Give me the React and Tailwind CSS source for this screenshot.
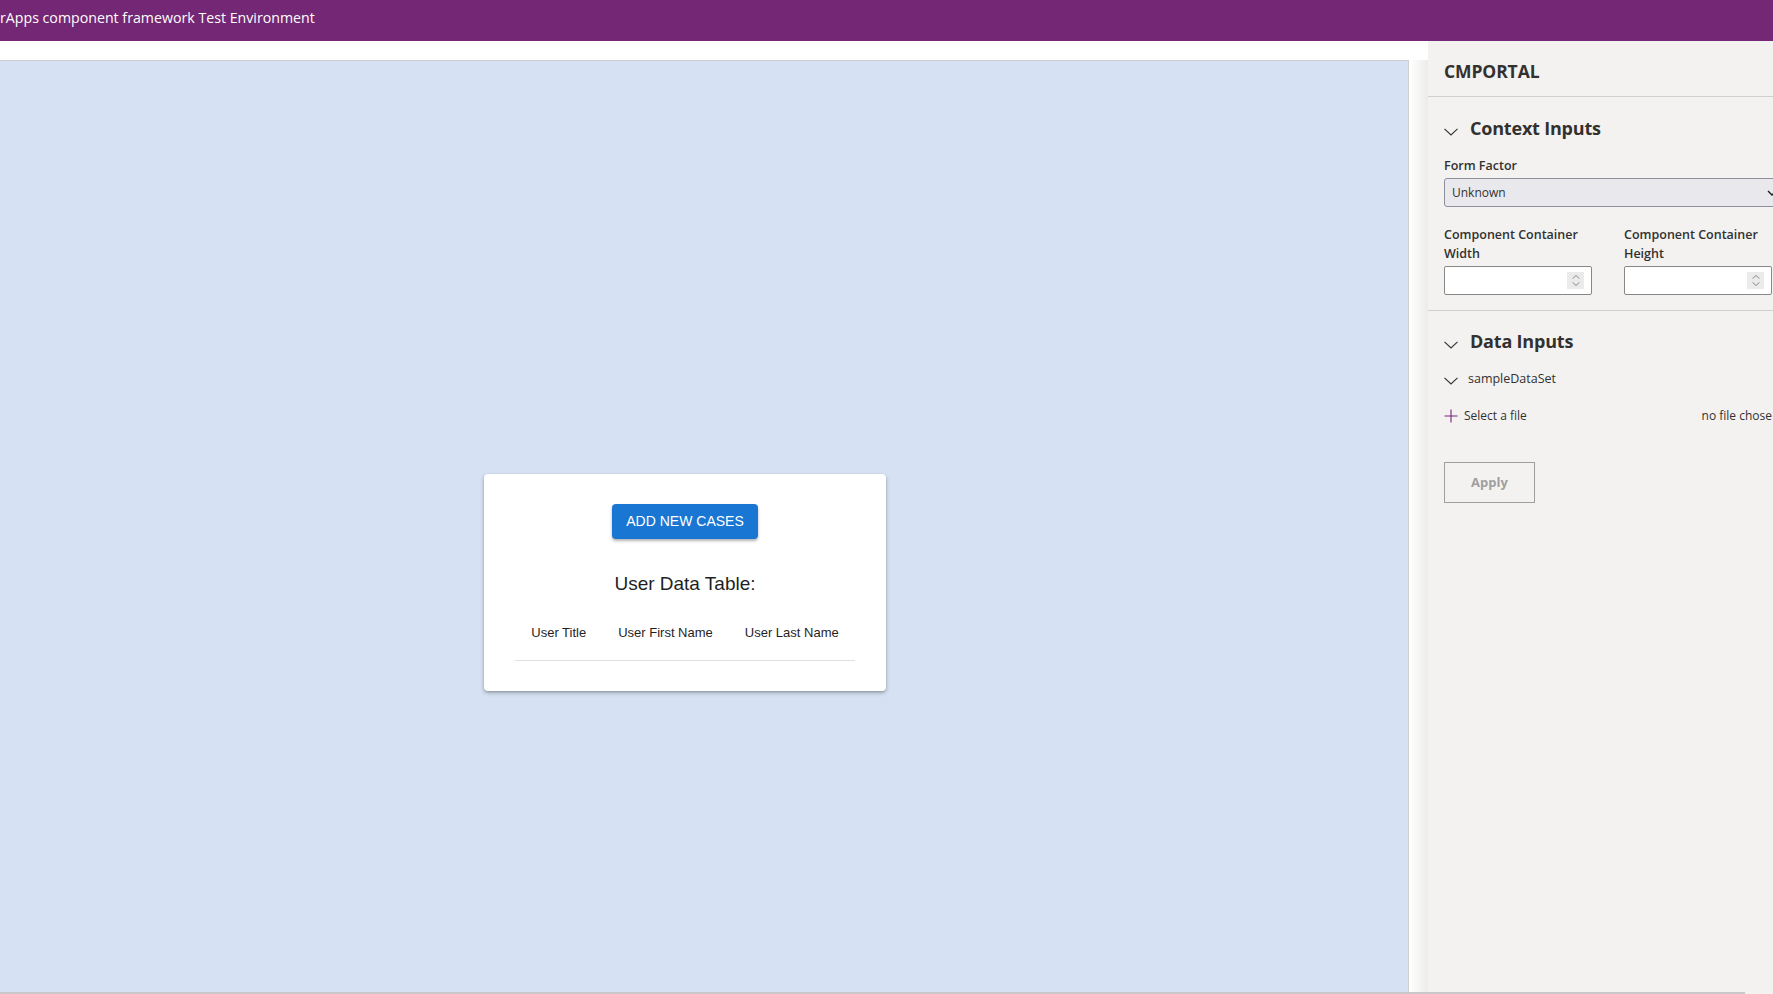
const PANEL_FONT = { fontFamily: '"Open Sans", "Noto Sans", sans-serif' };

function Chevron({ className = '' }) {
  return (
    <svg width="14" height="8" viewBox="0 0 14 8" className={className} fill="none">
      <path d="M0.5 0.8 L7 7 L13.5 0.8" stroke="#323130" strokeWidth="1.1" />
    </svg>
  );
}

function Spinner() {
  return (
    <div className="absolute right-[7px] top-[5px] flex h-[17px] w-[17px] flex-col items-center justify-center gap-[3px] bg-[#ebebeb]">
      <svg width="8" height="4" viewBox="0 0 8 4" fill="none">
        <path d="M0.5 3.7 L4 0.5 L7.5 3.7" stroke="#8a8a8a" strokeWidth="1" />
      </svg>
      <svg width="8" height="4" viewBox="0 0 8 4" fill="none">
        <path d="M0.5 0.3 L4 3.5 L7.5 0.3" stroke="#8a8a8a" strokeWidth="1" />
      </svg>
    </div>
  );
}

function NumberField({ label1, label2 }) {
  return (
    <div className="flex w-[147px] flex-col">
      <div className="text-[12.5px] font-semibold leading-[19px] text-[#323130]">
        {label1}
        <br />
        {label2}
      </div>
      <div className="relative mt-[3px] h-[29px] w-[148px] rounded-[2px] border border-[#8a8886] bg-white">
        <Spinner />
      </div>
    </div>
  );
}

function UserCard() {
  const cols = ['User Title', 'User First Name', 'User Last Name'];
  return (
    <div
      className="flex w-[402px] flex-col items-center rounded-[4px] bg-white pt-[30px] pb-[30px] shadow-[0_2px_4px_rgba(0,0,0,0.25),0_1px_2px_rgba(0,0,0,0.15)]"
      style={{ fontFamily: '"Liberation Sans", Arial, sans-serif' }}
    >
      <button className="h-[35px] w-[146px] rounded-[4px] bg-[#1976d2] text-[14px] text-white shadow-[0_2px_3px_rgba(0,0,0,0.3)]">
        ADD NEW CASES
      </button>
      <h2 className="mt-[33px] text-[19px] leading-[24px] text-[#1f1f1f]">User Data Table:</h2>
      <table className="mt-[24px]">
        <thead>
          <tr className="border-b border-[#e0e0e0]">
            {cols.map((c) => (
              <th key={c} className="px-4 pt-[4px] pb-[18px] text-left text-[13px] font-normal leading-[18px] text-[#1f1f1f]">
                {c}
              </th>
            ))}
          </tr>
        </thead>
      </table>
    </div>
  );
}

export default function App() {
  return (
    <div className="flex h-[994px] w-[1773px] flex-col overflow-hidden bg-[#f3f2f1]">
      <header
        className="flex h-[41px] shrink-0 items-center bg-[#742774] text-[14.2px] text-white"
        style={PANEL_FONT}
      >
        <span className="-mt-[5px]">rApps component framework Test Environment</span>
      </header>

      <div className="flex min-h-0 flex-1">
        <div className="flex w-[1428px] shrink-0 flex-col bg-white">
          <div className="h-[19px] shrink-0" />
          <div className="flex min-h-0 flex-1">
            <main className="w-[1409px] shrink-0 border-t border-r border-[#cfcfcf] bg-[#d6e2f3] pl-[484px] pt-[413px]">
              <UserCard />
            </main>
            <div className="flex-1 bg-gradient-to-r from-white via-[#f6f6f5] to-[#ebebea]" />
          </div>
        </div>

        <aside className="flex min-w-0 flex-1 flex-col text-[#323130]" style={PANEL_FONT}>
          <div className="flex h-[56px] shrink-0 items-center border-b border-[#d2d0ce] pl-[16px] pt-[5px]">
            <span className="text-[17.5px] font-bold tracking-[-0.1px]">CMPORTAL</span>
          </div>

          <section className="border-b border-[#d2d0ce] pb-[15px] pl-[16px]">
            <div className="flex items-center pt-[17px]">
              <Chevron className="mt-[8px]" />
              <span className="ml-[12px] text-[18px] font-bold leading-[28px] tracking-[-0.2px]">Context Inputs</span>
            </div>
            <div className="mt-[15px] text-[12.5px] font-semibold leading-[18px]">Form Factor</div>
            <div className="mt-[3px] flex h-[29px] w-[340px] items-center justify-between rounded-[3px] border border-[#8f8f9d] bg-[#e9e9ed] pl-[7px] pr-[6px]">
              <span className="text-[12px]">Unknown</span>
              <svg width="10" height="6" viewBox="0 0 10 6" fill="none">
                <path d="M1 1 L5 5 L9 1" stroke="#1f1f1f" strokeWidth="1.4" />
              </svg>
            </div>
            <div className="mt-[18px] flex gap-[33px]">
              <NumberField label1="Component Container" label2="Width" />
              <NumberField label1="Component Container" label2="Height" />
            </div>
          </section>

          <section className="pl-[16px]">
            <div className="flex items-center pt-[16px]">
              <Chevron className="mt-[8px]" />
              <span className="ml-[12px] text-[18px] font-bold leading-[28px] tracking-[-0.2px]">Data Inputs</span>
            </div>
            <div className="mt-[15px] flex items-center">
              <Chevron className="mt-[4px]" />
              <span className="ml-[10px] text-[12.5px] font-medium leading-[18px]">sampleDataSet</span>
            </div>
            <div className="mt-[19px] flex items-center justify-between">
              <div className="flex items-center">
                <svg width="14" height="14" viewBox="0 0 14 14" fill="none">
                  <path d="M7 0.5 V13.5 M0.5 7 H13.5" stroke="#742774" strokeWidth="1.1" />
                </svg>
                <span className="ml-[6px] text-[12px] leading-[18px]">Select a file</span>
              </div>
              <span className="whitespace-nowrap pr-[1px] text-[12px] leading-[18px]">no file chose</span>
            </div>
            <button className="mt-[37px] h-[41px] w-[91px] border border-[#a19f9d] text-[13px] font-bold text-[#a19f9d]">
              Apply
            </button>
          </section>
        </aside>
      </div>

      <div className="h-[2px] w-[1745px] shrink-0 bg-[#c8c8c8]" />
    </div>
  );
}
